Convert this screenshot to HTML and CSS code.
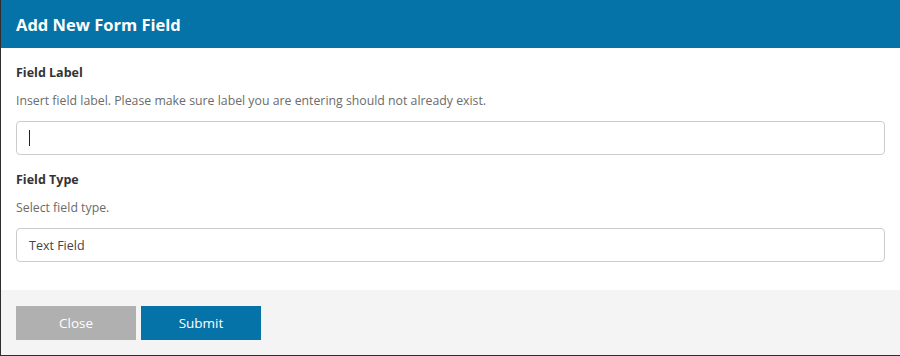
FILE: index.html
```html
<!DOCTYPE html>
<html lang="en">
<head>
  <meta charset="UTF-8" />
  <title>Add New Form Field</title>
  <link rel="stylesheet" href="styles.css">
</head>
<body>

  <div class="modal">
    <div class="modal-header">
      <h2>Add New Form Field</h2>
    </div>

    <div class="modal-body">
      <div class="field">
        <label for="field_label">Field Label</label>
        <p class="hint">Insert field label. Please make sure label you are entering should not already exist.</p>
        <div class="input focused"><span class="caret"></span></div>
      </div>

      <div class="field">
        <label for="field_type">Field Type</label>
        <p class="hint">Select field type.</p>
        <div class="input">Text Field</div>
      </div>
    </div>

    <div class="modal-footer">
      <button class="btn btn-close">Close</button>
      <button class="btn btn-submit">Submit</button>
    </div>
  </div>

</body>
</html>
```

FILE: styles.css
```css
body {
  margin: 0;
  background-color: #2e2e2e;
  font-family: 'Open Sans', 'Noto Sans', sans-serif;
  height: 356px;
  overflow: hidden;
}

.modal {
  margin-left: 1px;
  height: 355px;
  background-color: #ffffff;
  display: flex;
  flex-direction: column;
}

.modal-header {
  background-color: #0573a8;
  height: 48px;
  display: flex;
  align-items: center;
  padding: 0 15px;
}

.modal-header h2 {
  margin: 0;
  color: #ffffff;
  font-size: 16.5px;
  font-weight: 700;
}

.modal-body {
  padding: 16px 15px 0 15px;
  flex: 1;
}

.field label {
  display: block;
  font-size: 12.5px;
  font-weight: 700;
  color: #333333;
  line-height: 18px;
  margin-bottom: 10px;
}

.field .hint {
  margin: 0 0 11px 0;
  font-size: 12.3px;
  color: #6b6b6b;
  line-height: 18px;
}

.input {
  box-sizing: border-box;
  height: 34px;
  border: 1px solid #cccccc;
  border-radius: 4px;
  padding: 0 12px;
  display: flex;
  align-items: center;
  font-size: 12.5px;
  color: #444444;
  margin-bottom: 16px;
}

.caret {
  width: 1px;
  height: 16px;
  background-color: #222222;
}

.modal-footer {
  background-color: #f4f4f4;
  height: 65px;
  display: flex;
  align-items: center;
  gap: 5px;
  padding: 0 15px;
}

.btn {
  width: 120px;
  height: 34px;
  border: none;
  color: #ffffff;
  font-family: inherit;
  font-size: 13.5px;
  cursor: pointer;
}

.btn-close {
  background-color: #b0b0b0;
}

.btn-submit {
  background-color: #0573a8;
}
```
